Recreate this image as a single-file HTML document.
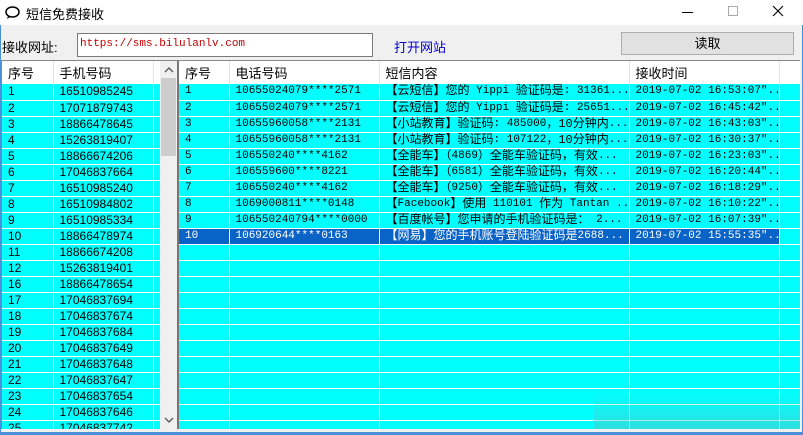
<!DOCTYPE html>
<html><head><meta charset="utf-8"><style>
*{margin:0;padding:0;box-sizing:border-box}
body{width:803px;height:435px;background:#f0f0f0;position:relative;overflow:hidden;font-family:"Liberation Sans","Noto Sans CJK SC",sans-serif;font-size:12px;color:#000}
.abs{position:absolute}
table{border-collapse:collapse;table-layout:fixed;position:absolute}
td{height:16px;border-right:1px solid #fff;border-bottom:1px solid #fff;padding:0 0 0 6px;white-space:nowrap;overflow:hidden;line-height:15px;background:#00ffff}
th{height:23px;background:#fff;font-weight:normal;text-align:left;padding-left:6px;border-right:1px solid #e5e5e5;font-size:13px}
.m td{font-family:"Liberation Mono","Noto Sans CJK SC",monospace;font-size:11px;line-height:15px;max-height:16px}
.m td span{font-size:12px;line-height:15px;vertical-align:top;display:inline-block;height:15px}
tr.sel td{background:#0a64c8;color:#fff}
</style></head><body>
<div class="abs" style="left:0;top:0;width:803px;height:25px;background:#fff"></div>
<svg class="abs" style="left:5px;top:6px" width="16" height="14"><ellipse cx="7.5" cy="6" rx="6.5" ry="5" fill="none" stroke="#000" stroke-width="1.5"/><path d="M3 10 L2 13 L6 10.5" fill="#000"/></svg>
<div class="abs" style="left:26px;top:4px;font-size:13px">短信免费接收</div>
<div class="abs" style="left:682px;top:12px;width:11px;height:1px;background:#000"></div>
<div class="abs" style="left:728px;top:6px;width:10px;height:10px;border:1px solid #aaa"></div>
<svg class="abs" style="left:772px;top:5px" width="12" height="12"><path d="M1 1L11 11M11 1L1 11" stroke="#000" stroke-width="1.1"/></svg>
<div class="abs" style="left:2px;top:37px;font-size:13px">接收网址:</div>
<div class="abs" style="left:77px;top:33px;width:296px;height:24px;background:#fff;border:1px solid #7a7a7a;padding:4px 0 0 2px;color:#c00000;font-family:'Liberation Mono',monospace;font-size:11px">https://sms.bilulanlv.com</div>
<div class="abs" style="left:394px;top:37px;color:#0000cc;font-size:13px">打开网站</div>
<div class="abs" style="left:621px;top:32px;width:173px;height:23px;background:#e1e1e1;border:1px solid #adadad;text-align:center;line-height:21px;font-size:13px">读取</div>

<div class="abs" style="left:0;top:60px;width:180px;height:369px;background:#00ffff;border-left:2px solid #888;border-top:1px solid #888;overflow:hidden">
<table style="left:0;top:0;width:158px">
<colgroup><col style="width:51px"><col style="width:100px"><col style="width:7px"></colgroup>
<tr><th>序号</th><th>手机号码</th><th style="border:none"></th></tr>
<tr><td>1</td><td>16510985245</td><td></td></tr>
<tr><td>2</td><td>17071879743</td><td></td></tr>
<tr><td>3</td><td>18866478645</td><td></td></tr>
<tr><td>4</td><td>15263819407</td><td></td></tr>
<tr><td>5</td><td>18866674206</td><td></td></tr>
<tr><td>6</td><td>17046837664</td><td></td></tr>
<tr><td>7</td><td>16510985240</td><td></td></tr>
<tr><td>8</td><td>16510984802</td><td></td></tr>
<tr><td>9</td><td>16510985334</td><td></td></tr>
<tr><td>10</td><td>18866478974</td><td></td></tr>
<tr><td>11</td><td>18866674208</td><td></td></tr>
<tr><td>12</td><td>15263819401</td><td></td></tr>
<tr><td>16</td><td>18866478654</td><td></td></tr>
<tr><td>17</td><td>17046837694</td><td></td></tr>
<tr><td>18</td><td>17046837674</td><td></td></tr>
<tr><td>19</td><td>17046837684</td><td></td></tr>
<tr><td>20</td><td>17046837649</td><td></td></tr>
<tr><td>21</td><td>17046837648</td><td></td></tr>
<tr><td>22</td><td>17046837647</td><td></td></tr>
<tr><td>23</td><td>17046837654</td><td></td></tr>
<tr><td>24</td><td>17046837646</td><td></td></tr>
<tr><td>25</td><td>17046837742</td><td></td></tr>
</table>
<div class="abs" style="left:158px;top:0;width:17px;height:369px;background:#f0f0f0"></div>
<div class="abs" style="left:159px;top:17px;width:15px;height:78px;background:#cdcdcd"></div>
<svg class="abs" style="left:162px;top:5px" width="10" height="8"><path d="M1 6L5 2L9 6" stroke="#606060" stroke-width="1.5" fill="none"/></svg>
<svg class="abs" style="left:162px;top:355px" width="10" height="8"><path d="M1 2L5 6L9 2" stroke="#606060" stroke-width="1.5" fill="none"/></svg>
</div>

<div class="abs" style="left:177px;top:60px;width:623px;height:369px;background:#00ffff;border-left:2px solid #777;border-top:1px solid #888;overflow:hidden">
<table class="m" style="left:0;top:0;width:621px">
<colgroup><col style="width:50px"><col style="width:150px"><col style="width:250px"><col style="width:150px"><col style="width:21px"></colgroup>
<tr><th>序号</th><th>电话号码</th><th>短信内容</th><th>接收时间</th><th></th></tr>
<tr><td>1</td><td>10655024079****2571</td><td><span>【云短信】您的</span> Yippi <span>验证码是</span>: 31361...</td><td>2019-07-02 16:53:07"...</td><td></td></tr>
<tr><td>2</td><td>10655024079****2571</td><td><span>【云短信】您的</span> Yippi <span>验证码是</span>: 25651...</td><td>2019-07-02 16:45:42"...</td><td></td></tr>
<tr><td>3</td><td>10655960058****2131</td><td><span>【小站教育】验证码</span>: 485000<span>，10分钟内</span>...</td><td>2019-07-02 16:43:03"...</td><td></td></tr>
<tr><td>4</td><td>10655960058****2131</td><td><span>【小站教育】验证码</span>: 107122<span>，10分钟内</span>...</td><td>2019-07-02 16:30:37"...</td><td></td></tr>
<tr><td>5</td><td>106550240****4162</td><td><span>【全能车】（</span>4869<span>）全能车验证码，有效</span>...</td><td>2019-07-02 16:23:03"...</td><td></td></tr>
<tr><td>6</td><td>106559600****8221</td><td><span>【全能车】（</span>6581<span>）全能车验证码，有效</span>...</td><td>2019-07-02 16:20:44"...</td><td></td></tr>
<tr><td>7</td><td>106550240****4162</td><td><span>【全能车】（</span>9250<span>）全能车验证码，有效</span>...</td><td>2019-07-02 16:18:29"...</td><td></td></tr>
<tr><td>8</td><td>1069000811****0148</td><td><span>【</span>Facebook<span>】使用</span> 110101 <span>作为</span> Tantan ...</td><td>2019-07-02 16:10:22"...</td><td></td></tr>
<tr><td>9</td><td>106550240794****0000</td><td><span>【百度帐号】您申请的手机验证码是：</span> 2...</td><td>2019-07-02 16:07:39"...</td><td></td></tr>
<tr class="sel"><td>10</td><td>106920644****0163</td><td><span>【网易】您的手机账号登陆验证码是</span>2688...</td><td>2019-07-02 15:55:35"...</td><td style="background:#00ffff"></td></tr>
<tr><td></td><td></td><td></td><td></td><td></td></tr><tr><td></td><td></td><td></td><td></td><td></td></tr>
<tr><td></td><td></td><td></td><td></td><td></td></tr><tr><td></td><td></td><td></td><td></td><td></td></tr>
<tr><td></td><td></td><td></td><td></td><td></td></tr><tr><td></td><td></td><td></td><td></td><td></td></tr>
<tr><td></td><td></td><td></td><td></td><td></td></tr><tr><td></td><td></td><td></td><td></td><td></td></tr>
<tr><td></td><td></td><td></td><td></td><td></td></tr><tr><td></td><td></td><td></td><td></td><td></td></tr>
<tr><td></td><td></td><td></td><td></td><td></td></tr><tr><td></td><td></td><td></td><td></td><td></td></tr>
</table>
<div class="abs" style="left:415px;top:330px;width:210px;height:40px;background:linear-gradient(180deg,rgba(0,255,255,0),rgba(80,200,200,.6))"></div>
</div>
<div class="abs" style="left:0;top:432px;width:803px;height:3px;background:#4a90d9"></div>
<div class="abs" style="left:0;top:25px;width:1px;height:410px;background:#4a90d9"></div>
<div class="abs" style="left:802px;top:25px;width:1px;height:410px;background:#4a90d9"></div>
</body></html>
